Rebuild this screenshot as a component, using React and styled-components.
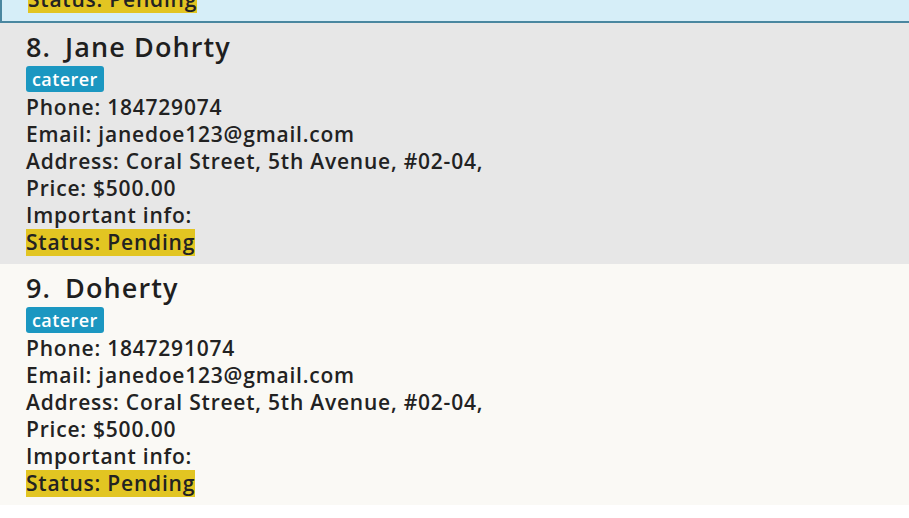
import React, { useLayoutEffect, useRef } from "react";
import styled, { createGlobalStyle } from "styled-components";

const GlobalStyle = createGlobalStyle`
  html, body {
    margin: 0;
    padding: 0;
    background: #ffffff;
  }
  body {
    font-family: "Open Sans", "Noto Sans", sans-serif;
    color: #222222;
  }
`;

const ListViewport = styled.div`
  height: 518px;
  overflow: hidden;
`;

const List = styled.div`
  display: flex;
  flex-direction: column;
  padding-bottom: 40px;
`;

const Card = styled.div`
  display: flex;
  flex-direction: column;
  align-items: flex-start;
  padding: 8px 0 8px 26px;
  background: ${(p) => (p.$selected ? "#d6eef8" : p.$odd ? "#e7e7e7" : "#faf9f5")};
  border: ${(p) => (p.$selected ? "2px solid #4a87a0" : "none")};
  border-right: none;
`;

const NameRow = styled.div`
  display: flex;
  align-items: baseline;
  font-size: 27px;
  font-weight: 600;
  letter-spacing: 1.1px;
  line-height: 32px;
  color: #1f1f1f;
`;

const Index = styled.span`
  margin-right: 14px;
`;

const Tag = styled.span`
  margin-top: 3px;
  padding: 0 6px;
  height: 26px;
  line-height: 26px;
  border-radius: 3px;
  background: #1b97c1;
  color: #ffffff;
  font-size: 18px;
  font-weight: 600;
  letter-spacing: 0.4px;
`;

const Fields = styled.div`
  margin-top: 2px;
  display: flex;
  flex-direction: column;
  align-items: flex-start;
`;

const Field = styled.div`
  font-size: 21px;
  font-weight: 600;
  letter-spacing: 0.78px;
  line-height: 27px;
  color: #222222;
  background: ${(p) => (p.$highlight ? "#e2c522" : "transparent")};
`;

const persons = [
  { id: 7, name: "Jane Doe", phone: "18472907", selected: true },
  { id: 8, name: "Jane Dohrty", phone: "184729074", odd: true },
  { id: 9, name: "Doherty", phone: "1847291074" },
];

const PersonCard = ({ person }) => (
  <Card $selected={person.selected} $odd={person.odd}>
    <NameRow>
      <Index>{person.id}.</Index>
      <span>{person.name}</span>
    </NameRow>
    <Tag>caterer</Tag>
    <Fields>
      <Field>Phone: {person.phone}</Field>
      <Field>Email: janedoe123@gmail.com</Field>
      <Field>Address: Coral Street, 5th Avenue, #02-04,</Field>
      <Field>Price: $500.00</Field>
      <Field>Important info:</Field>
      <Field $highlight>Status: Pending</Field>
    </Fields>
  </Card>
);

const App = () => {
  const viewportRef = useRef(null);
  const firstRef = useRef(null);

  useLayoutEffect(() => {
    const vp = viewportRef.current;
    const first = firstRef.current;
    if (vp && first) {
      vp.scrollTop = first.offsetHeight - 23;
    }
  }, []);

  return (
    <>
      <GlobalStyle />
      <ListViewport ref={viewportRef}>
        <List>
          <div ref={firstRef}>
            <PersonCard person={persons[0]} />
          </div>
          <PersonCard person={persons[1]} />
          <PersonCard person={persons[2]} />
        </List>
      </ListViewport>
    </>
  );
};

export default App;
